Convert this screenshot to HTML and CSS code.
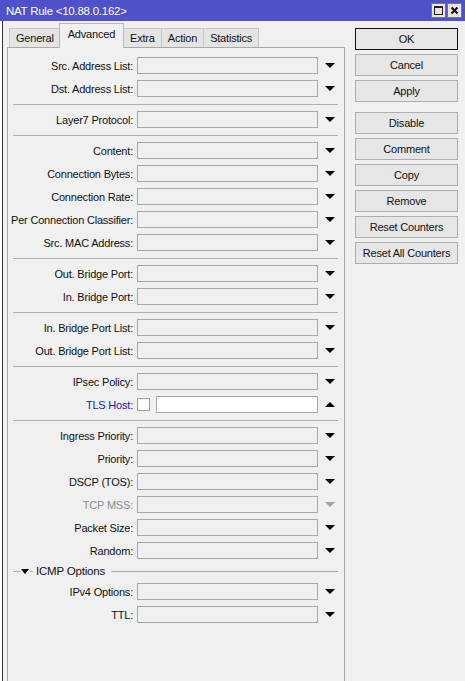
FILE: index.html
```html
<!DOCTYPE html>
<html lang="en">
<head>
  <meta charset="UTF-8">
  <meta name="viewport" content="width=device-width, initial-scale=1.0">
  <title>NAT Rule</title>
  <link rel="stylesheet" href="styles.css">
</head>
<body>

<div class="titlebar">
  <span class="title">NAT Rule &lt;10.88.0.162&gt;</span>
  <div class="wbtns">
    <span class="wbtn">
      <svg width="13" height="13" viewBox="0 0 13 13"><rect x="2.5" y="2.5" width="8" height="8" fill="none" stroke="#222" stroke-width="1"/><line x1="2.5" y1="3.5" x2="10.5" y2="3.5" stroke="#222" stroke-width="1"/></svg>
    </span>
    <span class="wbtn">
      <svg width="13" height="13" viewBox="0 0 13 13"><path d="M3.5 3.5 L9.5 9.5 M9.5 3.5 L3.5 9.5" stroke="#111" stroke-width="2"/></svg>
    </span>
  </div>
</div>

<div class="main">
  <div class="left">
    <div class="tabs">
      <div class="tab">General</div>
      <div class="tab active">Advanced</div>
      <div class="tab">Extra</div>
      <div class="tab">Action</div>
      <div class="tab">Statistics</div>
    </div>

    <div class="panel">
      <div class="row"><label>Src. Address List:</label><span class="field"></span><span class="drop"></span></div>
      <div class="row"><label>Dst. Address List:</label><span class="field"></span><span class="drop"></span></div>
      <div class="sep"></div>
      <div class="row"><label>Layer7 Protocol:</label><span class="field"></span><span class="drop"></span></div>
      <div class="sep"></div>
      <div class="row"><label>Content:</label><span class="field"></span><span class="drop"></span></div>
      <div class="row"><label>Connection Bytes:</label><span class="field"></span><span class="drop"></span></div>
      <div class="row"><label>Connection Rate:</label><span class="field"></span><span class="drop"></span></div>
      <div class="row"><label>Per Connection Classifier:</label><span class="field"></span><span class="drop"></span></div>
      <div class="row"><label>Src. MAC Address:</label><span class="field"></span><span class="drop"></span></div>
      <div class="sep"></div>
      <div class="row"><label>Out. Bridge Port:</label><span class="field"></span><span class="drop"></span></div>
      <div class="row"><label>In. Bridge Port:</label><span class="field"></span><span class="drop"></span></div>
      <div class="sep"></div>
      <div class="row"><label>In. Bridge Port List:</label><span class="field"></span><span class="drop"></span></div>
      <div class="row"><label>Out. Bridge Port List:</label><span class="field"></span><span class="drop"></span></div>
      <div class="sep"></div>
      <div class="row"><label>IPsec Policy:</label><span class="field"></span><span class="drop"></span></div>
      <div class="row"><label class="link">TLS Host:</label>
        <span class="combo"><span class="check"></span><span class="field editable"></span></span>
        <span class="drop up"></span>
      </div>
      <div class="sep"></div>
      <div class="row"><label>Ingress Priority:</label><span class="field"></span><span class="drop"></span></div>
      <div class="row"><label>Priority:</label><span class="field"></span><span class="drop"></span></div>
      <div class="row"><label>DSCP (TOS):</label><span class="field"></span><span class="drop"></span></div>
      <div class="row disabled"><label>TCP MSS:</label><span class="field"></span><span class="drop"></span></div>
      <div class="row"><label>Packet Size:</label><span class="field"></span><span class="drop"></span></div>
      <div class="row"><label>Random:</label><span class="field"></span><span class="drop"></span></div>

      <div class="group">
        <span class="gline short"></span>
        <span class="gtoggle"></span>
        <span class="gline tiny"></span>
        <span class="gtitle">ICMP Options</span>
        <span class="gline rest"></span>
      </div>
      <div class="row"><label>IPv4 Options:</label><span class="field"></span><span class="drop"></span></div>
      <div class="row"><label>TTL:</label><span class="field"></span><span class="drop"></span></div>
    </div>
  </div>

  <div class="actions">
    <button class="btn default">OK</button>
    <button class="btn">Cancel</button>
    <button class="btn">Apply</button>
    <button class="btn gap">Disable</button>
    <button class="btn">Comment</button>
    <button class="btn">Copy</button>
    <button class="btn">Remove</button>
    <button class="btn">Reset Counters</button>
    <button class="btn">Reset All Counters</button>
  </div>
</div>

</body>
</html>
```

FILE: styles.css
```css
body {
  margin: 0;
  width: 465px;
  height: 681px;
  overflow: hidden;
  background-color: #fff;
  font-family: "Liberation Sans", Arial, sans-serif;
  font-size: 11px;
  letter-spacing: -0.2px;
  color: #111;
}

/* window title */
.titlebar {
  height: 21px;
  background-color: #5050c8;
  display: flex;
  align-items: center;
  justify-content: space-between;
  padding: 0 3px 0 6px;
}
.title {
  color: #fff;
  font-size: 11.5px;
  letter-spacing: -0.25px;
}
.wbtns {
  display: flex;
  gap: 1px;
}
.wbtn {
  width: 15px;
  height: 15px;
  box-sizing: border-box;
  background-color: #e6e6e6;
  border: 1px solid #777;
  display: flex;
  align-items: center;
  justify-content: center;
}

/* window body */
.main {
  display: flex;
  height: 660px;
  margin-left: 2px;
  border-left: 1px solid #333;
  background-color: #f0f0f0;
}
.left {
  display: flex;
  flex-direction: column;
  padding-left: 4px;
  padding-top: 3px;
}

.tabs {
  display: flex;
  align-items: flex-end;
  margin-left: 2px;
  height: 24px;
}
.tab {
  height: 19px;
  line-height: 19px;
  padding: 0 6px;
  background-color: #e4e4e4;
  border: 1px solid #c8c8c8;
  border-bottom: none;
  margin-right: -1px;
}
.tab.active {
  height: 24px;
  line-height: 21px;
  background-color: #f0f0f0;
  position: relative;
  z-index: 1;
  margin: 0 -1px 0 -1px;
  padding: 0 8px;
  border-color: #b8b8b8;
}

.panel {
  flex: 1;
  width: 336px;
  margin-top: -1px;
  border: 1px solid #a8a8a8;
  border-bottom: none;
  padding-top: 6px;
}

.row {
  display: grid;
  grid-template-columns: 125px 181px 22px;
  column-gap: 4px;
  align-items: center;
  height: 23px;
}
.row label {
  text-align: right;
  white-space: nowrap;
}
.row label.link {
  color: #2020b0;
}
.field {
  height: 17px;
  box-sizing: border-box;
  border: 1px solid #a8a8a8;
  background-color: #f0f0f0;
}
.field.editable {
  flex: 1;
  background-color: #fff;
}
.combo {
  display: flex;
  align-items: center;
  gap: 6px;
}
.check {
  width: 13px;
  height: 13px;
  box-sizing: border-box;
  border: 1px solid #a0a0a0;
  background-color: #fff;
}
.drop {
  justify-self: start;
  margin-left: 3px;
  width: 0;
  height: 0;
  border-left: 5px solid transparent;
  border-right: 5px solid transparent;
  border-top: 5px solid #000;
}
.drop.up {
  border-top: none;
  border-bottom: 5px solid #000;
}
.row.disabled label {
  color: #8c8c8c;
}
.row.disabled .drop {
  border-top-color: #a0a0a0;
}

.sep {
  height: 8px;
  display: flex;
  align-items: center;
  margin: 0 6px 0 5px;
}
.sep::before {
  content: "";
  flex: 1;
  border-top: 1px solid #b0b0b0;
}

/* collapsible group header */
.group {
  display: flex;
  align-items: center;
  height: 18px;
  margin: 0 6px 0 5px;
}
.gline {
  border-top: 1px solid #a8a8a8;
}
.gline.short {
  width: 7px;
}
.gline.tiny {
  width: 3px;
}
.gline.rest {
  flex: 1;
  margin-left: 6px;
}
.gtoggle {
  margin: 0 1px;
  width: 0;
  height: 0;
  border-left: 4px solid transparent;
  border-right: 4px solid transparent;
  border-top: 5px solid #000;
}
.gtitle {
  margin-left: 3px;
  font-size: 11.5px;
}

/* buttons on the right */
.actions {
  display: flex;
  flex-direction: column;
  gap: 4px;
  width: 103px;
  margin-left: 10px;
  padding-top: 7px;
}
.btn {
  height: 22px;
  padding: 0;
  font-family: inherit;
  font-size: 11px;
  letter-spacing: -0.2px;
  color: #111;
  background-color: #e6e6e6;
  border: 1px solid #adadad;
}
.btn.default {
  border: 1px solid #111;
}
.btn.gap {
  margin-top: 6px;
}
```
